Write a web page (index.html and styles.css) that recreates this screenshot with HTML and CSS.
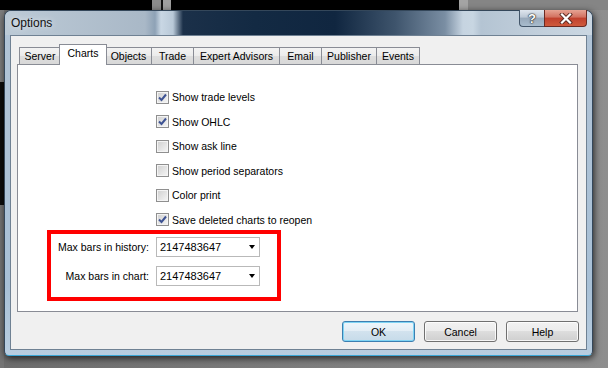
FILE: index.html
```html
<!DOCTYPE html>
<html lang="en">
<head>
    <meta charset="UTF-8">
    <title>Options</title>
    <link rel="stylesheet" href="styles.css">
</head>
<body>

    <div class="window">
        <!-- Title bar -->
        <div class="titlebar">
            <span class="title">Options</span>
            <div class="caption-buttons">
                <span class="cap-btn cap-help">?</span>
                <span class="cap-btn cap-close">
                    <svg width="14" height="11" viewBox="0 0 14 11">
                        <path d="M3 1.5 L11 9.5 M11 1.5 L3 9.5" stroke="#5a2a22" stroke-width="4" stroke-linecap="square"/>
                        <path d="M3 1.5 L11 9.5 M11 1.5 L3 9.5" stroke="#fff" stroke-width="2.2" stroke-linecap="square"/>
                    </svg>
                </span>
            </div>
        </div>

        <div class="client">
            <div class="tabs">
                <div class="tab">Server</div>
                <div class="tab selected">Charts</div>
                <div class="tab">Objects</div>
                <div class="tab">Trade</div>
                <div class="tab">Expert Advisors</div>
                <div class="tab">Email</div>
                <div class="tab">Publisher</div>
                <div class="tab">Events</div>
            </div>

            <div class="panel">
                <div class="checks">
                    <div class="check"><span class="box"><svg width="11" height="11" viewBox="0 0 11 11"><path d="M2 5.5 L4.5 8 L9 2.5" fill="none" stroke="#3e5393" stroke-width="2"/></svg></span>Show trade levels</div>
                    <div class="check"><span class="box"><svg width="11" height="11" viewBox="0 0 11 11"><path d="M2 5.5 L4.5 8 L9 2.5" fill="none" stroke="#3e5393" stroke-width="2"/></svg></span>Show OHLC</div>
                    <div class="check"><span class="box"></span>Show ask line</div>
                    <div class="check"><span class="box"></span>Show period separators</div>
                    <div class="check"><span class="box"></span>Color print</div>
                    <div class="check"><span class="box"><svg width="11" height="11" viewBox="0 0 11 11"><path d="M2 5.5 L4.5 8 L9 2.5" fill="none" stroke="#3e5393" stroke-width="2"/></svg></span>Save deleted charts to reopen</div>
                </div>

                <!-- Highlighted bar limits -->
                <div class="highlight">
                    <span class="field-label">Max bars in history:</span>
                    <div class="combo"><span>2147483647</span><span class="arrow"></span></div>
                    <span class="field-label">Max bars in chart:</span>
                    <div class="combo"><span>2147483647</span><span class="arrow"></span></div>
                </div>
            </div>

            <div class="buttons">
                <button class="btn default">OK</button>
                <button class="btn">Cancel</button>
                <button class="btn">Help</button>
            </div>
        </div>
    </div>

</body>
</html>
```

FILE: styles.css
```css
/* Desktop behind the dialog */
body {
    margin: 0;
    padding: 10px 0 0 4px;
    width: 608px;
    height: 368px;
    box-sizing: border-box;
    overflow: hidden;
    font-family: 'Liberation Sans', Arial, sans-serif;
    font-size: 10.5px;
    color: #000;
    background:
        linear-gradient(to right, #000 0 152px, #8c8c8c 152px 161px, #111 161px 163px, #a0a0a0 163px 171px, #000 171px 459px, #a4a4a4 459px 468px, #858585 468px) top / 100% 10px no-repeat,
        linear-gradient(to bottom, #000 0 10px, #7c7c7c 10px 82px, #0c0c0c 82px 205px, #747474 205px) left / 4px 100% no-repeat,
        linear-gradient(to right, #6c6c6c, #8e8e8e);
}

/* Window frame (Aero glass) */
.window {
    width: 589px;
    height: 346px;
    box-sizing: border-box;
    border: 1px solid #34475a;
    border-bottom-color: #3aa6d6;
    border-radius: 7px 7px 5px 5px;
    padding: 0 5px 5px 5px;
    background: linear-gradient(to bottom, #b2c4d6, #a8c0d6 80%, #b8cde0);
    box-shadow: 1px 2px 7px rgba(0, 0, 0, 0.75);
    display: flex;
    flex-direction: column;
}

.titlebar {
    height: 24px;
    margin: 0 -5px;
    padding: 0 5px;
    display: flex;
    align-items: center;
    justify-content: space-between;
    border-radius: 6px 6px 0 0;
    background: linear-gradient(to right,
        #bccad6 0, #a9b8c7 140px, #8ea2b6 150px, #c9d7e4 156px, #b9c9d8 168px,
        #1b3049 178px, #132a43 250px, #102640 330px, #3e546c 390px, #7a8ea3 440px,
        #c6d4e1 458px, #c8d6e2 468px, #b4c4d3 476px, #c3d0dc 540px, #cbd7e2 589px);
}

.title {
    padding-left: 1px;
    font-size: 12px;
    color: #111;
    text-shadow: 0 0 6px rgba(255, 255, 255, 0.8);
}

.caption-buttons {
    align-self: flex-start;
    margin-top: -1px;
    display: flex;
}

.cap-btn {
    height: 17px;
    box-sizing: border-box;
    border: 1px solid #43566a;
    border-top: none;
    display: flex;
    align-items: center;
    justify-content: center;
}

.cap-help {
    width: 25px;
    border-right: none;
    border-radius: 0 0 0 4px;
    background: linear-gradient(to bottom, #dfe6ee, #bcc8d5 45%, #97a8ba 50%, #a9bccd);
    color: #fff;
    font-weight: bold;
    font-size: 13px;
    text-shadow: 0 0 1px #222, 0 0 1px #222, 0 0 2px #333;
}

.cap-close {
    width: 43px;
    border-radius: 0 0 4px 0;
    border-color: #6b2a22;
    background: linear-gradient(to bottom, #e6a494, #d2705f 45%, #c0402d 50%, #cf5a3c);
}

/* Dialog client area */
.client {
    flex: 1;
    background-color: #f0f0f0;
    border: 1px solid #6f8193;
    padding: 8px 8px 7px 6px;
    display: flex;
    flex-direction: column;
}

.tabs {
    height: 20px;
    margin-left: 2px;
    display: flex;
    align-items: flex-end;
}

.tab {
    height: 17px;
    box-sizing: border-box;
    margin-right: -1px;
    border: 1px solid #898c95;
    border-bottom: none;
    background: linear-gradient(to bottom, #f3f3f3, #ebebeb 50%, #dedede 50%, #d8d8d8);
    text-align: center;
    line-height: 16px;
}

/* tab widths follow the original dialog */
.tab:nth-child(1) { width: 42px; }
.tab:nth-child(3) { width: 47px; }
.tab:nth-child(4) { width: 43px; }
.tab:nth-child(5) { width: 87px; }
.tab:nth-child(6) { width: 43px; }
.tab:nth-child(7) { width: 56px; }
.tab:nth-child(8) { width: 44px; }

.tab.selected {
    width: 48px;
    height: 21px;
    margin: 0 -2px -1px -1px;
    position: relative;
    z-index: 1;
    background: #fff;
    line-height: 17px;
}

.panel {
    flex: 1;
    background-color: #fff;
    border: 1px solid #898c95;
}

/* Checkbox list */
.checks {
    padding: 22px 0 0 138px;
    display: flex;
    flex-direction: column;
    gap: 4.6px;
}

.check {
    height: 20px;
    display: flex;
    align-items: center;
    gap: 3px;
}

.box {
    width: 13px;
    height: 13px;
    box-sizing: border-box;
    border: 1px solid #8f8f8f;
    background: linear-gradient(135deg, #cfcfcf, #f6f6f6);
    box-shadow: inset 0 0 0 1px #f4f4f4;
    display: flex;
    align-items: center;
    justify-content: center;
}

/* Red highlight around the bar limits */
.highlight {
    width: 234px;
    box-sizing: border-box;
    margin-left: 29px;
    border: 4px solid #ff0000;
    padding: 3px 17px 11px 0;
    display: grid;
    grid-template-columns: 98px 104px;
    column-gap: 7px;
    row-gap: 9px;
    align-items: center;
}

.field-label {
    text-align: right;
}

.combo {
    height: 20px;
    box-sizing: border-box;
    border: 1px solid #b9b9b9;
    padding: 0 4px 0 3px;
    font-size: 11px;
    display: flex;
    align-items: center;
    justify-content: space-between;
}

.arrow {
    width: 0;
    height: 0;
    border-left: 3.5px solid transparent;
    border-right: 3.5px solid transparent;
    border-top: 4px solid #000;
}

/* Bottom buttons */
.buttons {
    margin: 9px -1px 0 0;
    display: flex;
    justify-content: flex-end;
    gap: 9px;
}

.btn {
    width: 73px;
    height: 21px;
    font-family: 'Liberation Sans', Arial, sans-serif;
    font-size: 10.5px;
    color: #000;
    border: 1px solid #707070;
    border-radius: 3px;
    background: linear-gradient(to bottom, #f2f2f2, #ebebeb 50%, #dddddd 50%, #cfcfcf);
    box-shadow: inset 0 0 0 1px rgba(255, 255, 255, 0.8);
    padding: 0;
}

.btn.default {
    border-color: #3c7fb1;
    background: linear-gradient(to bottom, #eef6fb, #e2edf5 50%, #d2e2ee 50%, #c6dbe9);
    box-shadow: inset 0 0 0 1px #7fd4f4;
}
```
